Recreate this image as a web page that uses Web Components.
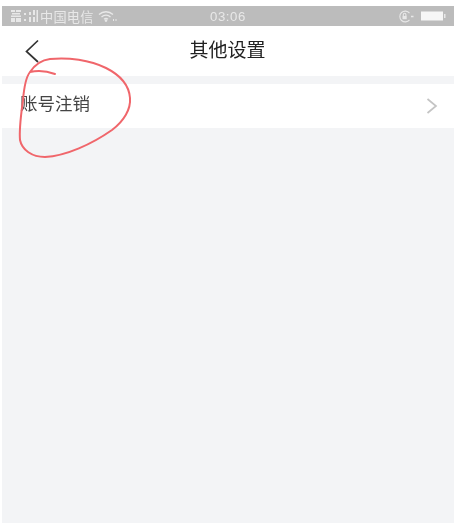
<!DOCTYPE html>
<html lang="zh">
<head>
<meta charset="utf-8">
<style>
html, body { margin: 0; height: 100%; background: #fff; }
body { font-family: "Liberation Sans", "Noto Sans CJK SC", sans-serif; overflow: hidden; }
</style>
</head>
<body>
<settings-screen>
  <status-bar></status-bar>
  <nav-bar>其他设置</nav-bar>
  <setting-row>账号注销</setting-row>
</settings-screen>

<script>
class SettingsScreen extends HTMLElement {
    constructor() {
        super();
        this.attachShadow({mode: "open"});
    }
    connectedCallback() {
        this.shadowRoot.innerHTML = `
        <style>
            :host {
                display: flex;
                flex-direction: column;
                position: relative;
                box-sizing: border-box;
                width: 461px;
                height: 523px;
                padding: 6px 7px 0 2px;
                background: #fff;
            }
            .page {
                flex: 1;
                display: flex;
                flex-direction: column;
                background: #f3f4f6;
                filter: blur(.35px);
            }
            svg {
                position: absolute;
                left: 0;
                top: 0;
                pointer-events: none;
            }
        </style>
        <div class="page"><slot></slot></div>
        <svg width="461" height="523" viewBox="0 0 461 523" fill="none">
            <path d="M55 74 C47 71 38 70 30 72 C26 77 24 88 23 100 C21 115 19 128 20 140 C22 150 32 157 45 157 C66 156 92 144 112 130 C124 121 131 109 130 98 C129 85 120 75 106 68 C90 60 68 57 50 59 C42 60 36 63 30 72" stroke="#f0666b" stroke-width="2" stroke-linecap="round"/>
        </svg>`;
    }
}

class StatusBar extends HTMLElement {
    constructor() {
        super();
        this.attachShadow({mode: "open"});
    }
    connectedCallback() {
        this.shadowRoot.innerHTML = `
        <style>
            :host {
                display: grid;
                grid-template-columns: 1fr auto 1fr;
                align-items: center;
                height: 20px;
                padding: 0 8px;
                background: #bcbcbc;
                color: #e8e8e8;
                font-size: 13.2px;
            }
            .left, .right { display: flex; align-items: center; }
            .left { gap: 2px; }
            .carrier { letter-spacing: .2px; margin-right: 2px; }
            .right { justify-content: flex-end; gap: 7px; }
            .time { letter-spacing: .6px; padding-top: 1px; }
            svg { display: block; }
        </style>
        <div class="left">
            <svg width="28" height="14" viewBox="0 0 28 14" fill="#e8e8e8">
                <rect x="1" y="1" width="4" height="2"/><rect x="6" y="1" width="5" height="2"/>
                <rect x="2" y="4" width="8" height="1.5"/><rect x="1" y="6.5" width="10" height="1.5"/>
                <rect x="1" y="9" width="4" height="4"/><rect x="6" y="9" width="5" height="4"/>
                <rect x="14" y="4" width="2" height="2"/><rect x="14" y="10" width="2" height="2"/>
                <rect x="19" y="3" width="2" height="3"/><rect x="19" y="8" width="2" height="5"/>
                <rect x="23" y="1" width="2" height="5"/><rect x="23" y="8" width="2" height="5"/>
                <rect x="26.5" y="1" width="1.5" height="12"/>
            </svg>
            <span class="carrier">中国电信</span>
            <svg width="19" height="12" viewBox="0 0 19 12" fill="none" stroke="#e8e8e8" stroke-width="1.3">
                <path d="M1 4.5 C5 .8 11 .8 15 4.5"/><path d="M3.5 7 C6 4.6 10 4.6 12.5 7"/><path d="M6 9.2 C7.2 8.2 8.8 8.2 10 9.2"/>
                <circle cx="8" cy="10.6" r=".7" fill="#e8e8e8"/>
                <path d="M15.5 9 v2 M18 9 v2" stroke-width="1"/>
            </svg>
        </div>
        <span class="time">03:06</span>
        <div class="right">
            <svg width="16" height="13" viewBox="0 0 16 13" fill="none" stroke="#e8e8e8" stroke-width="1.1">
                <path d="M11.5 9.8 A5.4 5.4 0 1 1 11.5 3.2"/>
                <rect x="4.5" y="6" width="4.2" height="3.2" fill="#e8e8e8" stroke="none"/>
                <path d="M5.3 6 V4.6 a1.3 1.3 0 0 1 2.6 0 V6"/>
                <path d="M13 6.5 h2.5" stroke-width="1.5"/>
            </svg>
            <svg width="25" height="10" viewBox="0 0 25 10">
                <rect x="0" y="0.5" width="22" height="9" fill="#f6f6f6"/>
                <rect x="23" y="3" width="1.5" height="4" fill="#e8e8e8"/>
            </svg>
        </div>`;
    }
}

class NavBar extends HTMLElement {
    constructor() {
        super();
        this.attachShadow({mode: "open"});
    }
    connectedCallback() {
        this.shadowRoot.innerHTML = `
        <style>
            :host {
                display: flex;
                align-items: center;
                justify-content: center;
                position: relative;
                height: 50px;
                margin-bottom: 8px;
                background: #fff;
                color: #222;
                font-size: 19px;
            }
            svg { position: absolute; left: 22px; top: 13px; }
            .title { margin-left: -1px; padding-bottom: 6px; }
        </style>
        <svg width="18" height="24" viewBox="0 0 18 24" fill="none" stroke="#333" stroke-width="1.7">
            <path d="M14 1.5 L2.5 12.5 L14 23"/>
        </svg>
        <span class="title"><slot></slot></span>`;
    }
}

class SettingRow extends HTMLElement {
    constructor() {
        super();
        this.attachShadow({mode: "open"});
    }
    connectedCallback() {
        this.shadowRoot.innerHTML = `
        <style>
            :host {
                display: flex;
                align-items: center;
                justify-content: space-between;
                height: 44px;
                padding: 0 16px 0 18px;
                background: #fff;
                color: #444;
                font-size: 17.5px;
            }
            span { padding-bottom: 8px; }
            svg { display: block; }
        </style>
        <span><slot></slot></span>
        <svg width="12" height="16" viewBox="0 0 12 16" fill="none" stroke="#c4c4c4" stroke-width="1.7">
            <path d="M1.5 1 L10 8 L1.5 15"/>
        </svg>`;
    }
}

customElements.define("settings-screen", SettingsScreen);
customElements.define("status-bar", StatusBar);
customElements.define("nav-bar", NavBar);
customElements.define("setting-row", SettingRow);
</script>
</body>
</html>
